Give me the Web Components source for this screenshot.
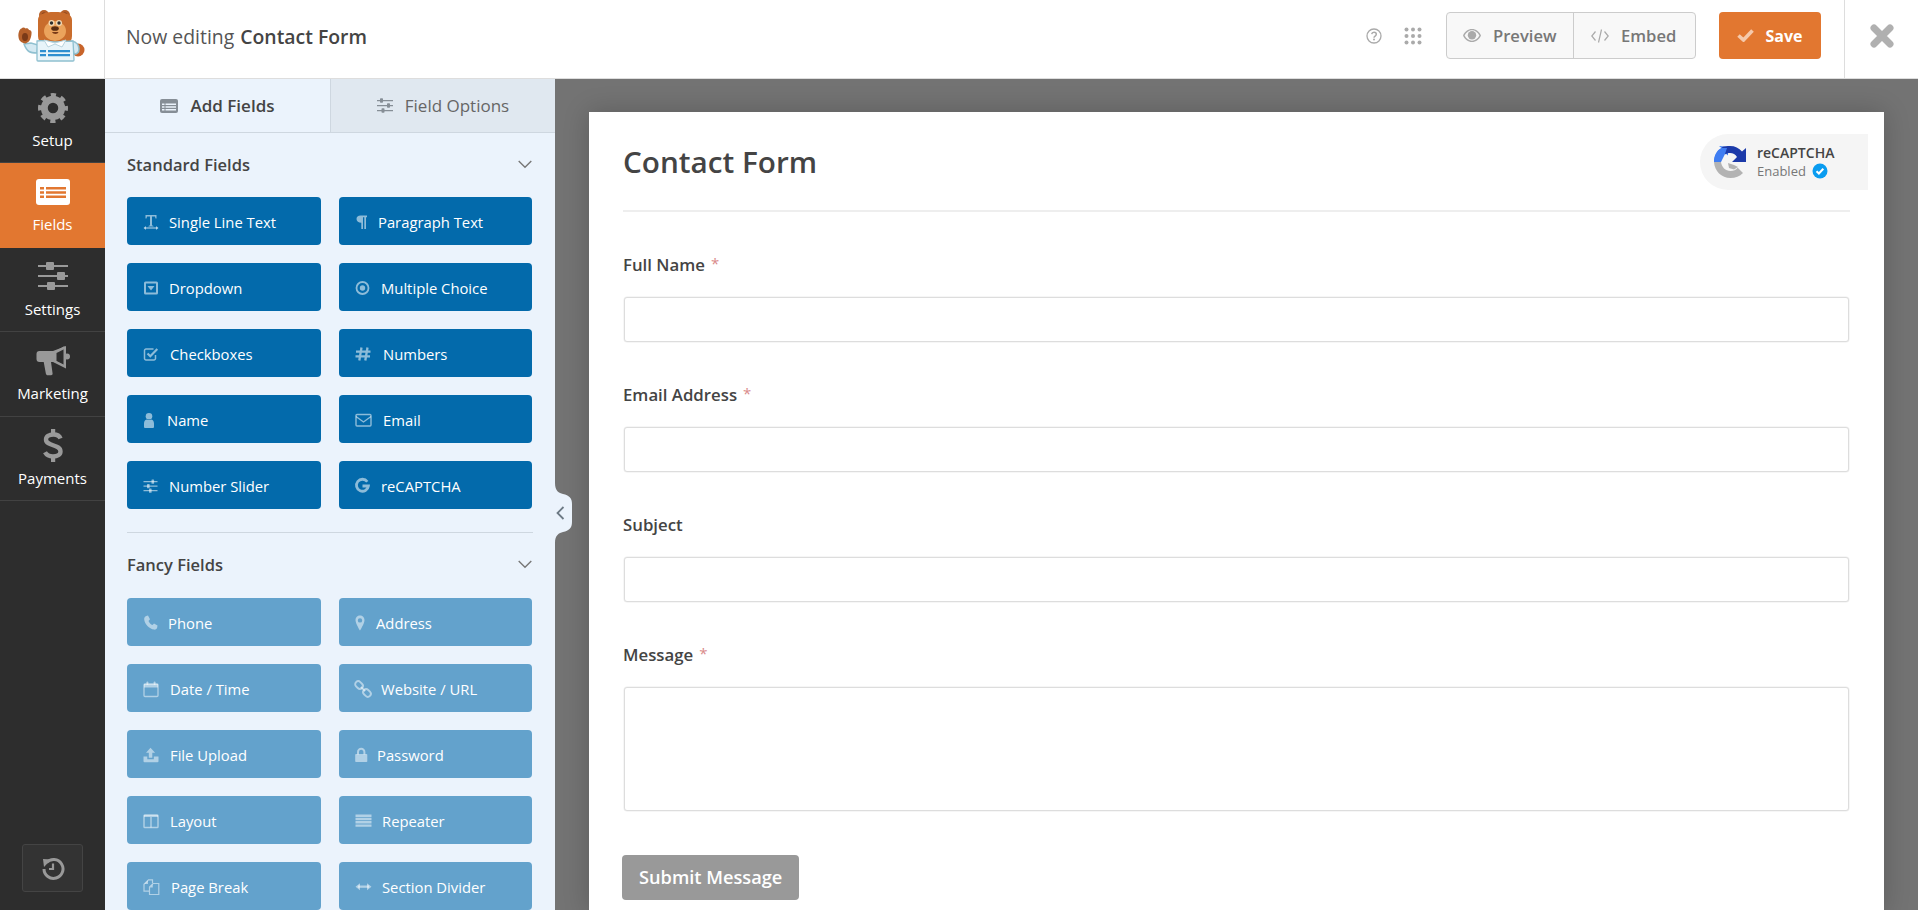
<!DOCTYPE html>
<html lang="en">
<head>
<meta charset="utf-8">
<title>Now editing Contact Form</title>
<style>
  html, body { margin: 0; height: 100%; overflow: hidden; }
  body { font-family: "Open Sans", "Noto Sans", sans-serif; color: #444; }
</style>
</head>
<body>
<wf-builder>
  <wf-topbar slot="top" form="Contact Form"></wf-topbar>
  <wf-sidenav slot="nav">
    <wf-nav-item icon="gear" label="Setup"></wf-nav-item>
    <wf-nav-item icon="fields" label="Fields" active></wf-nav-item>
    <wf-nav-item icon="sliders" label="Settings"></wf-nav-item>
    <wf-nav-item icon="bullhorn" label="Marketing"></wf-nav-item>
    <wf-nav-item icon="dollar" label="Payments"></wf-nav-item>
  </wf-sidenav>
  <wf-panel slot="panel">
    <wf-group title="Standard Fields">
      <wf-field icon="text" gap="26">Single Line Text</wf-field>
      <wf-field icon="para" gap="23">Paragraph Text</wf-field>
      <wf-field icon="dropdown" gap="26">Dropdown</wf-field>
      <wf-field icon="radio" gap="26">Multiple Choice</wf-field>
      <wf-field icon="check" gap="27">Checkboxes</wf-field>
      <wf-field icon="hash" gap="28">Numbers</wf-field>
      <wf-field icon="user" gap="24">Name</wf-field>
      <wf-field icon="mail" gap="28">Email</wf-field>
      <wf-field icon="slider" gap="26">Number Slider</wf-field>
      <wf-field icon="google" gap="26">reCAPTCHA</wf-field>
    </wf-group>
    <wf-group title="Fancy Fields" fancy>
      <wf-field icon="phone" gap="25">Phone</wf-field>
      <wf-field icon="pin" gap="21">Address</wf-field>
      <wf-field icon="calendar" gap="27">Date / Time</wf-field>
      <wf-field icon="link" gap="26">Website / URL</wf-field>
      <wf-field icon="upload" gap="27">File Upload</wf-field>
      <wf-field icon="lock" gap="22">Password</wf-field>
      <wf-field icon="columns" gap="27">Layout</wf-field>
      <wf-field icon="rows" gap="27">Repeater</wf-field>
      <wf-field icon="copy" gap="28">Page Break</wf-field>
      <wf-field icon="arrows" gap="27">Section Divider</wf-field>
    </wf-group>
  </wf-panel>
  <wf-preview slot="main" title="Contact Form">
    <wf-input label="Full Name" required></wf-input>
    <wf-input label="Email Address" required></wf-input>
    <wf-input label="Subject"></wf-input>
    <wf-input label="Message" required area></wf-input>
  </wf-preview>
</wf-builder>

<script>
const FIELD_ICONS = {
  text: '<path d="M2.500 1h11v3.600h-1L12 2.600H9v8.700l1.500.6v.6h-5v-.6l1.500-.6V2.600H4l-.5 2h-1z"/><path d="M1.500 13.300h13v1.400h-13z"/><path d="M3 12l-2.500 2 2.500 2zM13 12l2.500 2-2.500 2z"/>',
  para: '<path d="M5.500 1.500h6.500v1.800h-1V15H9.300V3.300H8V15H6.300V8.800C3.600 8.800 1.500 7.200 1.500 5S3 1.500 5.500 1.500z"/>',
  dropdown: '<path fill-rule="evenodd" d="M2.500 1.500h11a1.500 1.500 0 0 1 1.500 1.500v10a1.500 1.500 0 0 1-1.500 1.500h-11A1.500 1.500 0 0 1 1 13V3a1.500 1.500 0 0 1 1.500-1.500zM3 3.500v9h10v-9z"/><path d="M4.500 6h7L8 10.500z"/>',
  radio: '<circle cx="7.500" cy="8" r="6" fill="none" stroke="currentColor" stroke-width="1.800"/><circle cx="7.500" cy="8" r="2.700"/>',
  check: '<path fill="none" stroke="currentColor" stroke-width="1.500" d="M12.500 9v3.500a1.500 1.500 0 0 1-1.500 1.500H3a1.500 1.500 0 0 1-1.500-1.500v-8A1.500 1.500 0 0 1 3 3h7.500"/><path fill="none" stroke="currentColor" stroke-width="2.200" d="M4.500 7.500l2.800 2.800 7-7.300"/>',
  hash: '<path fill="none" stroke="currentColor" stroke-width="2.300" d="M6.500 1.500L4.300 14.500M12.500 1.500l-2.200 13M1 5.700h14.500M.5 10.300H15"/>',
  user: '<circle cx="6" cy="4.300" r="3.300"/><path d="M1 15v-3.500C1 9 2.500 7.500 4 7.500c1.200.8 2.800.8 4 0 1.500 0 3 1.500 3 4V15a1 1 0 0 1-1 1H2a1 1 0 0 1-1-1z"/>',
  mail: '<rect x="1" y="2.500" width="15" height="11.500" rx="1" fill="none" stroke="currentColor" stroke-width="1.400"/><path fill="none" stroke="currentColor" stroke-width="1.400" d="M1 4.500l7.500 5.500L16 4.500"/>',
  slider: '<path d="M.5 3h14v1.300H.5zM.5 7.500h14v1.300H.5zM.5 12h14v1.300H.5z"/><rect x="8.500" y="1.500" width="2.600" height="4.300" rx=".6"/><rect x="4" y="6" width="2.600" height="4.300" rx=".6"/><rect x="6" y="10.500" width="2.600" height="4.300" rx=".6"/>',
  google: '<path fill="none" stroke="currentColor" stroke-width="2.800" d="M12.300 3.700A6 6 0 1 0 13.400 8H7.500"/>',
  phone: '<path d="M3.200 1L5 .6l2 3.700-1.500 1.600c.8 1.800 2.200 3.300 4 4.200l1.500-1.500 3.500 2-.3 1.800c-.3 1.500-1.700 2.400-3 2.200C6 13.800 1.800 9.200 1.200 4.500 1 2.800 2 1.400 3.200 1z"/>',
  pin: '<path fill-rule="evenodd" d="M5 .5C2.500.5.500 2.600.5 5.200.5 8.400 5 15.500 5 15.500s4.500-7.100 4.500-10.300C9.500 2.600 7.500.5 5 .5zM5 3.200a2.200 2.200 0 1 1 0 4.400 2.200 2.200 0 0 1 0-4.400z"/>',
  calendar: '<rect x="1" y="3" width="14" height="12.500" rx="1" fill="none" stroke="currentColor" stroke-width="1.300"/><path d="M1 3h14v3.500H1z"/><rect x="3.500" y=".5" width="1.800" height="3.500" rx=".8"/><rect x="10.700" y=".5" width="1.800" height="3.500" rx=".8"/>',
  link: '<g fill="none" stroke="currentColor" stroke-width="1.900" transform="rotate(-45 8 8)"><rect x="5" y="-1.800" width="6" height="8.400" rx="3"/><rect x="5" y="9.400" width="6" height="8.400" rx="3"/><path d="M8 5v6"/></g>',
  upload: '<path d="M7.500.8l4.600 5H9.300v5H5.800v-5H3z"/><path d="M.5 9.500h3.800v2.800h6.500V9.500h4.700v4.800a1 1 0 0 1-1 1h-13a1 1 0 0 1-1-1z"/>',
  lock: '<path d="M1 7h10.500a.8.800 0 0 1 .8.800v6.500a.8.800 0 0 1-.8.800H1a.8.800 0 0 1-.8-.8V7.800A.8.800 0 0 1 1 7z"/><path fill="none" stroke="currentColor" stroke-width="2" d="M3 7.500V5a3.200 3.200 0 0 1 6.400 0v2.500"/>',
  columns: '<rect x="1" y="2" width="14" height="12.500" rx=".8" fill="none" stroke="currentColor" stroke-width="1.400"/><path d="M7.300 2h1.400v12.500H7.300zM1 2h14v2H1z"/>',
  rows: '<path d="M.5 1.500h16v2.400H.5zM.5 4.800h16v2.400H.5zM.5 8.100h16v2.400H.5zM.5 11.400h16v2.400H.5z"/>',
  copy: '<g fill="none" stroke="currentColor" stroke-width="1.200"><path d="M9.500 4V.8H5.500L1 5.300v6.900h5"/><path d="M15.800 4.500H10L6.500 8v7.500h9.300z"/></g><path d="M5 1.300v3.600H1.400zM9.800 5v3.400H6.800z"/>',
  arrows: '<path d="M3 6.500h11v2.300H3z"/><path d="M5 4.200v7l-4.500-3.500zM12 4.200v7l4.500-3.500z"/>'
};

const NAV_ICONS = {
  gear: '<svg width="30" height="30" viewBox="0 0 32 32"><circle cx="16" cy="16" r="9.300" fill="none" stroke="currentColor" stroke-width="7.400"/><circle cx="16" cy="16" r="13.500" fill="none" stroke="currentColor" stroke-width="5" stroke-dasharray="5.400 5.200" stroke-dashoffset="2.700"/></svg>',
  fields: '<svg width="34" height="26" viewBox="0 0 34 26"><rect width="34" height="26" rx="3" fill="#fff"/><path fill="#e27730" d="M4 8h4v2.400H4zM10 8h20v2.400H10zM4 12.300h4v2.400H4zM10 12.300h20v2.400H10zM4 16.600h4V19H4zM10 16.600h20V19H10z"/></svg>',
  sliders: '<svg width="30" height="28" viewBox="0 0 30 28"><path fill="currentColor" d="M0 3h30v2H0zM0 13h30v2H0zM0 23h30v2H0z"/><rect x="8" y="0" width="8" height="8" rx="1" fill="currentColor"/><rect x="19" y="10" width="8" height="8" rx="1" fill="currentColor"/><rect x="9" y="20" width="8" height="8" rx="1" fill="currentColor"/></svg>',
  bullhorn: '<svg width="34" height="31" viewBox="0 0 34 31"><path fill="currentColor" d="M30 1v22.500L17 17H15l1.600 11.500c.1 1-.6 1.700-1.500 1.700h-3.400c-1 0-1.600-.6-1.800-1.500L7.700 17H3.500A3 3 0 0 1 .5 14V9a3 3 0 0 1 3-3H17z"/><path fill="#2d2d2d" d="M20 7.200l7.500-3.700v16.500L20 16z"/><path fill="currentColor" d="M19 6.500l9.500-5.500v3L20.500 8v8l8 4v2l-9.500-5z"/><circle cx="31" cy="11.500" r="3" fill="currentColor"/></svg>',
  dollar: '<svg width="20" height="35" viewBox="0 0 20 35"><path fill="none" stroke="currentColor" stroke-width="4.400" d="M17.500 10.500C16.500 7.800 13.500 6.500 10.500 6.500 6 6.500 3 8.500 3 11.500c0 7 14.500 4.500 14.500 12 0 3.200-3.200 5-7.500 5-3.300 0-6.500-1.500-8-4.200"/><path fill="currentColor" d="M8 1h4.200v6H8zM8 28h4.200v6H8z"/></svg>'
};

class WfBuilder extends HTMLElement {
  constructor() {
    super();
    this.attachShadow({ mode: 'open' }).innerHTML = `
      <style>
        :host { display: grid; grid-template: 79px 831px / 105px 450px 1fr; height: 910px; overflow: hidden; }
        ::slotted(wf-topbar) { grid-column: 1 / -1; }
      </style>
      <slot name="top"></slot><slot name="nav"></slot><slot name="panel"></slot><slot name="main"></slot>`;
  }
}

class WfTopbar extends HTMLElement {
  constructor() {
    super();
    const form = this.getAttribute('form');
    this.attachShadow({ mode: 'open' }).innerHTML = `
      <style>
        :host { display: flex; align-items: stretch; background: #fff; border-bottom: 1px solid #ddd; box-sizing: border-box; height: 79px; }
        .logo { width: 105px; border-right: 1px solid #ddd; box-sizing: border-box; flex: none; }
        .logo svg { display: block; }
        .title { flex: 1; display: flex; align-items: center; padding: 0 0 5px 21px; font-size: 19.400px; color: #555; }
        .title b { font-weight: 600; color: #444; margin-left: 6px; }
        .tools { display: flex; align-items: center; padding-bottom: 7px; }
        .help { margin-right: 22px; display: block; }
        .dots { margin-right: 24px; display: block; }
        .group { display: flex; height: 47px; box-sizing: border-box; border: 1px solid #ccc; border-radius: 4px; background: #f8f8f8; margin-right: 23px; }
        .group span { display: flex; align-items: center; gap: 12px; font-size: 16.600px; font-weight: 600; color: #777; padding-left: 16px; box-sizing: border-box; }
        .group .pv { width: 126px; }
        .group .em { width: 122px; border-left: 1px solid #ccc; padding-left: 17px; }
        .save { width: 102px; height: 47px; background: #e27730; border-radius: 4px; color: #fff; font-weight: 700; font-size: 16px; display: flex; align-items: center; justify-content: center; gap: 11px; }
        .close { width: 74px; margin-left: 23px; border-left: 1px solid #ddd; display: flex; align-items: center; justify-content: center; padding-bottom: 7px; box-sizing: border-box; flex: none; }
      </style>
      <div class="logo">
        <svg width="104" height="78" viewBox="0 0 104 78">
          <path fill="#d4e9f2" stroke="#8fc0d0" stroke-width="1.500" d="M24 44c3 8 6 9 13 9l1-8-7-2z"/>
          <circle cx="78" cy="50" r="6.500" fill="#c8642a"/>
          <path fill="#d4e9f2" stroke="#8fc0d0" stroke-width="1.500" d="M72 41c4 1 7 4 7 8 0 3-2 5-5 5z"/>
          <path fill="#b5602a" d="M18.500 37c-.5-4 1-8 3-8.500 1-1.500 3-1.500 4 0 1.500-.5 3 0 3.500 1.500 1.800 0 3 1.500 2.500 4-.5 4-1.500 8-6 9.500-4-.5-6.500-2.500-7-6.500z"/>
          <ellipse cx="25" cy="37" rx="3" ry="4" fill="#7a3a18"/>
          <circle cx="44" cy="15" r="5" fill="#b5602a"/><circle cx="65" cy="15" r="5" fill="#b5602a"/>
          <circle cx="44" cy="15" r="2.500" fill="#7a3a18"/><circle cx="65" cy="15" r="2.500" fill="#7a3a18"/>
          <path fill="#c96c2c" d="M38 20c0-6 6-8 16.500-8S72 14 72 20v16c0 4-2 6-4 7H42c-2-1-4-3-4-7z"/>
          <ellipse cx="55" cy="31" rx="11" ry="10" fill="#eba35c"/>
          <circle cx="51.500" cy="23" r="3" fill="#f3d9b5"/><circle cx="59" cy="23" r="3" fill="#f3d9b5"/>
          <circle cx="51.500" cy="23" r="1.700" fill="#2d2d2d"/><circle cx="59" cy="23" r="1.700" fill="#2d2d2d"/>
          <ellipse cx="55" cy="28.500" rx="3.800" ry="2.300" fill="#5a2d12"/>
          <path fill="#7a3a18" d="M52 32h6.500c-.5 2.500-5.500 2.500-6.500 0z"/>
          <path fill="#e8f4f9" stroke="#8fc0d0" stroke-width="1.300" d="M37 41c5-1 9 0 18 1 7 0 12-1 18-1l1 19c0 .6-.5 1-1 1H38c-.6 0-1-.5-1-1z"/>
          <path fill="#fff" stroke="#b8d4de" d="M44 40l11 3 11-3-4 7-7-3-7 3z"/>
          <path fill="#2e8fd0" d="M40 50h6v2.200h-6zM48 50h22v2.200H48zM40 54h6v2.200h-6zM48 54h22v2.200H48z"/>
        </svg>
      </div>
      <div class="title">Now editing <b>${form}</b></div>
      <div class="tools">
        <svg class="help" width="16" height="16" viewBox="0 0 16 16"><circle cx="8" cy="8" r="7" fill="none" stroke="#aaa" stroke-width="1.300"/><path fill="none" stroke="#aaa" stroke-width="1.500" d="M5.700 6.200C5.900 4.900 6.900 4.300 8 4.300c1.300 0 2.300.8 2.300 2 0 1.800-2.300 1.700-2.300 3.400"/><circle cx="8" cy="11.600" r="1" fill="#aaa"/></svg>
        <svg class="dots" width="18" height="18" viewBox="0 0 18 18" fill="#aaa"><circle cx="2.500" cy="2.500" r="2"/><circle cx="9" cy="2.500" r="2"/><circle cx="15.500" cy="2.500" r="2"/><circle cx="2.500" cy="9" r="2"/><circle cx="9" cy="9" r="2"/><circle cx="15.500" cy="9" r="2"/><circle cx="2.500" cy="15.500" r="2"/><circle cx="9" cy="15.500" r="2"/><circle cx="15.500" cy="15.500" r="2"/></svg>
        <div class="group">
          <span class="pv"><svg width="18" height="13" viewBox="0 0 18 13"><path fill="#aaa" fill-rule="evenodd" d="M9 0c4 0 7.200 2.600 9 6.500C16.200 10.400 13 13 9 13S1.800 10.400 0 6.500C1.800 2.600 5 0 9 0zM9 1.300C6 1.300 3.300 3.300 1.600 6.500 3.300 9.700 6 11.700 9 11.700s5.700-2 7.400-5.200C14.700 3.300 12 1.300 9 1.300z"/><circle cx="9" cy="6.300" r="4.200" fill="#aaa"/></svg>Preview</span>
          <span class="em"><svg width="18" height="14" viewBox="0 0 18 14" fill="none" stroke="#aaa" stroke-width="1.200"><path d="M4.500 2.500L.8 7l3.700 4.500M13.500 2.500L17.200 7l-3.700 4.500M10.500.5l-3 13"/></svg>Embed</span>
        </div>
        <div class="save"><svg width="17" height="13" viewBox="0 0 17 13"><path fill="none" stroke="#f5c9ab" stroke-width="3.600" d="M1.500 6.500l5 4.500L15.500 1.500"/></svg>Save</div>
      </div>
      <div class="close"><svg width="24" height="24" viewBox="0 0 24 24"><path fill="none" stroke="#b0b0b0" stroke-width="7" stroke-linecap="round" d="M4 4l16 16M20 4L4 20"/></svg></div>`;
  }
}

class WfSidenav extends HTMLElement {
  constructor() {
    super();
    this.attachShadow({ mode: 'open' }).innerHTML = `
      <style>
        :host { display: flex; flex-direction: column; background: #2d2d2d; height: 831px; }
        .spacer { flex: 1; }
        .history { width: 61px; height: 48px; box-sizing: border-box; margin: 0 auto 18px; border: 1px solid #444; border-radius: 3px; background: #333; display: flex; align-items: center; justify-content: center; }
      </style>
      <slot></slot>
      <div class="spacer"></div>
      <div class="history"><svg width="24" height="24" viewBox="0 0 24 24" fill="none" stroke="#999" stroke-width="3"><path d="M5.500 6.500A9.500 9.500 0 1 1 3 13"/><path fill="#999" stroke="none" d="M2 3l8 .5L3 11z"/><path stroke-width="2.200" d="M12 7.500V13H8"/></svg></div>`;
  }
}

class WfNavItem extends HTMLElement {
  constructor() {
    super();
    this.attachShadow({ mode: 'open' }).innerHTML = `
      <style>
        :host { display: block; height: 84.400px; box-sizing: border-box; border-bottom: 1px solid #424242; color: #999; }
        :host([active]) { background: #e27730; color: #fff; border-bottom-color: #e27730; }
        .wrap { height: 100%; display: flex; flex-direction: column; align-items: center; }
        .icon { height: 57px; display: flex; align-items: center; justify-content: center; flex: none; }
        .icon svg { display: block; }
        .label { font-size: 15px; line-height: 20px; color: #fff; margin-top: -6px; }
      </style>
      <div class="wrap">
        <div class="icon">${NAV_ICONS[this.getAttribute('icon')]}</div>
        <div class="label">${this.getAttribute('label')}</div>
      </div>`;
  }
}

class WfPanel extends HTMLElement {
  constructor() {
    super();
    this.attachShadow({ mode: 'open' }).innerHTML = `
      <style>
        :host { display: block; background: #ebf3fc; height: 831px; overflow: hidden; }
        .tabs { display: flex; height: 54px; box-sizing: border-box; border-bottom: 1px solid #ced7e0; }
        .tab { display: flex; align-items: center; justify-content: center; gap: 12px; font-size: 17px; box-sizing: border-box; }
        .tab.on { width: 225px; font-weight: 600; color: #444; }
        .tab.off { flex: 1; background: #e0e8f0; color: #666; border-left: 1px solid #ced7e0; }
        .body { padding: 0 22px; }
      </style>
      <div class="tabs">
        <div class="tab on"><svg width="18" height="14" viewBox="0 0 18 14"><rect width="18" height="14" rx="2" fill="#868e96"/><path fill="#ebf3fc" d="M2 4.500h2.500V6H2zM5.500 4.500H16V6H5.500zM2 7.200h2.500v1.500H2zM5.500 7.200H16v1.500H5.500zM2 10h2.500v1.500H2zM5.500 10H16v1.500H5.500z"/></svg>Add Fields</div>
        <div class="tab off"><svg width="16" height="15" viewBox="0 0 16 15" fill="#868e96"><path d="M0 2h16v1.200H0zM0 7h16v1.200H0zM0 12h16v1.200H0z"/><rect x="3" y=".3" width="3" height="4.500" rx=".8"/><rect x="10" y="5.300" width="3" height="4.500" rx=".8"/><rect x="4.500" y="10.300" width="3" height="4.500" rx=".8"/></svg>Field Options</div>
      </div>
      <div class="body"><slot></slot></div>`;
  }
}

class WfGroup extends HTMLElement {
  constructor() {
    super();
    this.attachShadow({ mode: 'open' }).innerHTML = `
      <style>
        :host { display: block; padding-top: 20px; --field-bg: #036aab; --field-icon: rgba(255,255,255,.55); --head-gap: 22px; }
        :host([fancy]) { --field-bg: #63a2cc; --field-icon: rgba(255,255,255,.5); --head-gap: 23px; border-top: 1px solid #ced7e0; margin-top: 23px; }
        .head { display: flex; justify-content: space-between; align-items: center; height: 22px; font-size: 16.500px; font-weight: 600; color: #444; margin-bottom: var(--head-gap); }
        .head svg { margin-right: 1px; }
        .grid { display: grid; grid-template-columns: 194px 193px; column-gap: 18px; row-gap: 18px; }
      </style>
      <div class="head"><span>${this.getAttribute('title')}</span><svg width="14" height="9" viewBox="0 0 14 9" fill="none" stroke="#777" stroke-width="1.400"><path d="M.7 1l6.300 6.300L13.300 1"/></svg></div>
      <div class="grid"><slot></slot></div>`;
  }
}

class WfField extends HTMLElement {
  constructor() {
    super();
    const svg = FIELD_ICONS[this.getAttribute('icon')];
    this.attachShadow({ mode: 'open' }).innerHTML = `
      <style>
        :host { display: flex; align-items: center; height: 48px; box-sizing: border-box; padding: 1px 0 0 16px; background: var(--field-bg); border-radius: 4px; color: #fff; font-size: 14.800px; }
        .ic { width: ${this.getAttribute('gap')}px; flex: none; display: flex; color: var(--field-icon); }
        svg { display: block; overflow: visible; }
      </style>
      <span class="ic"><svg width="16" height="16" viewBox="0 0 16 16" fill="currentColor">${svg}</svg></span><slot></slot>`;
  }
}

class WfPreview extends HTMLElement {
  constructor() {
    super();
    this.attachShadow({ mode: 'open' }).innerHTML = `
      <style>
        :host { display: block; position: relative; background: #737373; height: 831px; padding: 33px 34px 0; box-sizing: border-box; overflow: hidden; }
        .card { position: relative; background: #fff; height: 800px; box-sizing: border-box; padding: 28px 34px 0 34px; box-shadow: 0 0 25px rgba(0,0,0,.2); }
        h1 { margin: 0; font-size: 29.700px; line-height: 44px; font-weight: 600; color: #444; padding-bottom: 26px; border-bottom: 2px solid #eee; }
        .fields { padding-top: 42px; }
        .submit { display: inline-block; margin-top: 44px; margin-left: -1px; background: #999; color: #fff; font-weight: 600; font-size: 18.200px; line-height: 45px; padding: 0 17px; border-radius: 4px; }
        .handle { position: absolute; left: 0; top: 404px; width: 18px; height: 60px; }
        .handle svg { display: block; }
      </style>
      <div class="card">
        <h1>${this.getAttribute('title')}</h1>
        <wf-recaptcha></wf-recaptcha>
        <div class="fields"><slot></slot></div>
        <div class="submit">Submit Message</div>
      </div>
      <div class="handle"><svg width="18" height="60" viewBox="0 0 18 60"><path fill="#ebf3fc" d="M0 0c0 8 4 10 8 11 6 1.500 9 4 9 10v18c0 6-3 8.500-9 10-4 1-8 3-8 11z"/><path fill="none" stroke="#6d7a85" stroke-width="1.800" d="M8.500 24L2.500 30l6 6"/></svg></div>`;
  }
}

class WfRecaptcha extends HTMLElement {
  constructor() {
    super();
    this.attachShadow({ mode: 'open' }).innerHTML = `
      <style>
        :host { position: absolute; right: 16px; top: 22px; width: 168px; height: 56px; box-sizing: border-box; background: #f5f5f5; border-radius: 28px 0 0 28px; display: flex; align-items: center; padding-left: 14px; gap: 11px; }
        svg { display: block; flex: none; }
        .t { line-height: 18px; font-size: 14px; font-weight: 600; color: #444; }
        .s { display: flex; align-items: center; gap: 6px; font-size: 13px; font-weight: 400; color: #777; }
      </style>
      <svg width="32" height="32" viewBox="0 0 32 32">
        <path fill="#b3b3b3" d="M0 16h7c.5 5 4.500 9 9.500 9 3 0 5.500-1.200 7.200-3.300L29 27c-3.200 3.200-7.500 5-12.500 5C7.500 32 .5 25 0 16z"/>
        <path fill="#b3b3b3" d="M14 17l6 2 4 2-4 2.500-5-1.500z"/>
        <path fill="#3f7df2" d="M0 16C0 9 3 4 7.500 2L5 0l9 1v8.500l-3-2.500C8.500 9 7 12 7 16z"/>
        <path fill="#1c3aa9" d="M8 1C10.500.3 13 0 16 0c5 0 9 2 12 5.500L32 2v14H18l5-5c-1.500-2.500-4-4-7-4-2 0-3.500.5-5 1.500z"/>
        <path fill="#3f7df2" d="M7.500 2h5.500L11 8 7 16H0c0-6 3-11 7.500-14z"/>
      </svg>
      <div>
        <div class="t">reCAPTCHA</div>
        <div class="s">Enabled <svg width="16" height="16" viewBox="0 0 16 16"><circle cx="8" cy="8" r="7.500" fill="#0a9cf0"/><path fill="none" stroke="#fff" stroke-width="2" d="M4.500 8.200l2.400 2.300 4.400-4.700"/></svg></div>
      </div>`;
  }
}

class WfInput extends HTMLElement {
  constructor() {
    super();
    const req = this.hasAttribute('required') ? '<i>*</i>' : '';
    this.attachShadow({ mode: 'open' }).innerHTML = `
      <style>
        :host { display: block; padding-bottom: 42px; }
        .lab { font-size: 16.800px; line-height: 22px; font-weight: 600; color: #444; margin: 0 0 21px; }
        i { font-style: normal; font-weight: 400; font-size: 15px; color: #d98a8a; margin-left: 6px; position: relative; top: -2px; }
        .box { height: 45px; box-sizing: border-box; border: 1px solid #ddd; box-shadow: 0 0 0 .5px #eee; border-radius: 3px; background: #fff; margin-left: 1px; margin-right: 1px; }
        :host([area]) { padding-bottom: 0; }
        :host([area]) .box { height: 124px; }
      </style>
      <div class="lab">${this.getAttribute('label')}${req}</div>
      <div class="box"></div>`;
  }
}

customElements.define('wf-builder', WfBuilder);
customElements.define('wf-topbar', WfTopbar);
customElements.define('wf-sidenav', WfSidenav);
customElements.define('wf-nav-item', WfNavItem);
customElements.define('wf-panel', WfPanel);
customElements.define('wf-group', WfGroup);
customElements.define('wf-field', WfField);
customElements.define('wf-preview', WfPreview);
customElements.define('wf-recaptcha', WfRecaptcha);
customElements.define('wf-input', WfInput);
</script>
</body>
</html>
